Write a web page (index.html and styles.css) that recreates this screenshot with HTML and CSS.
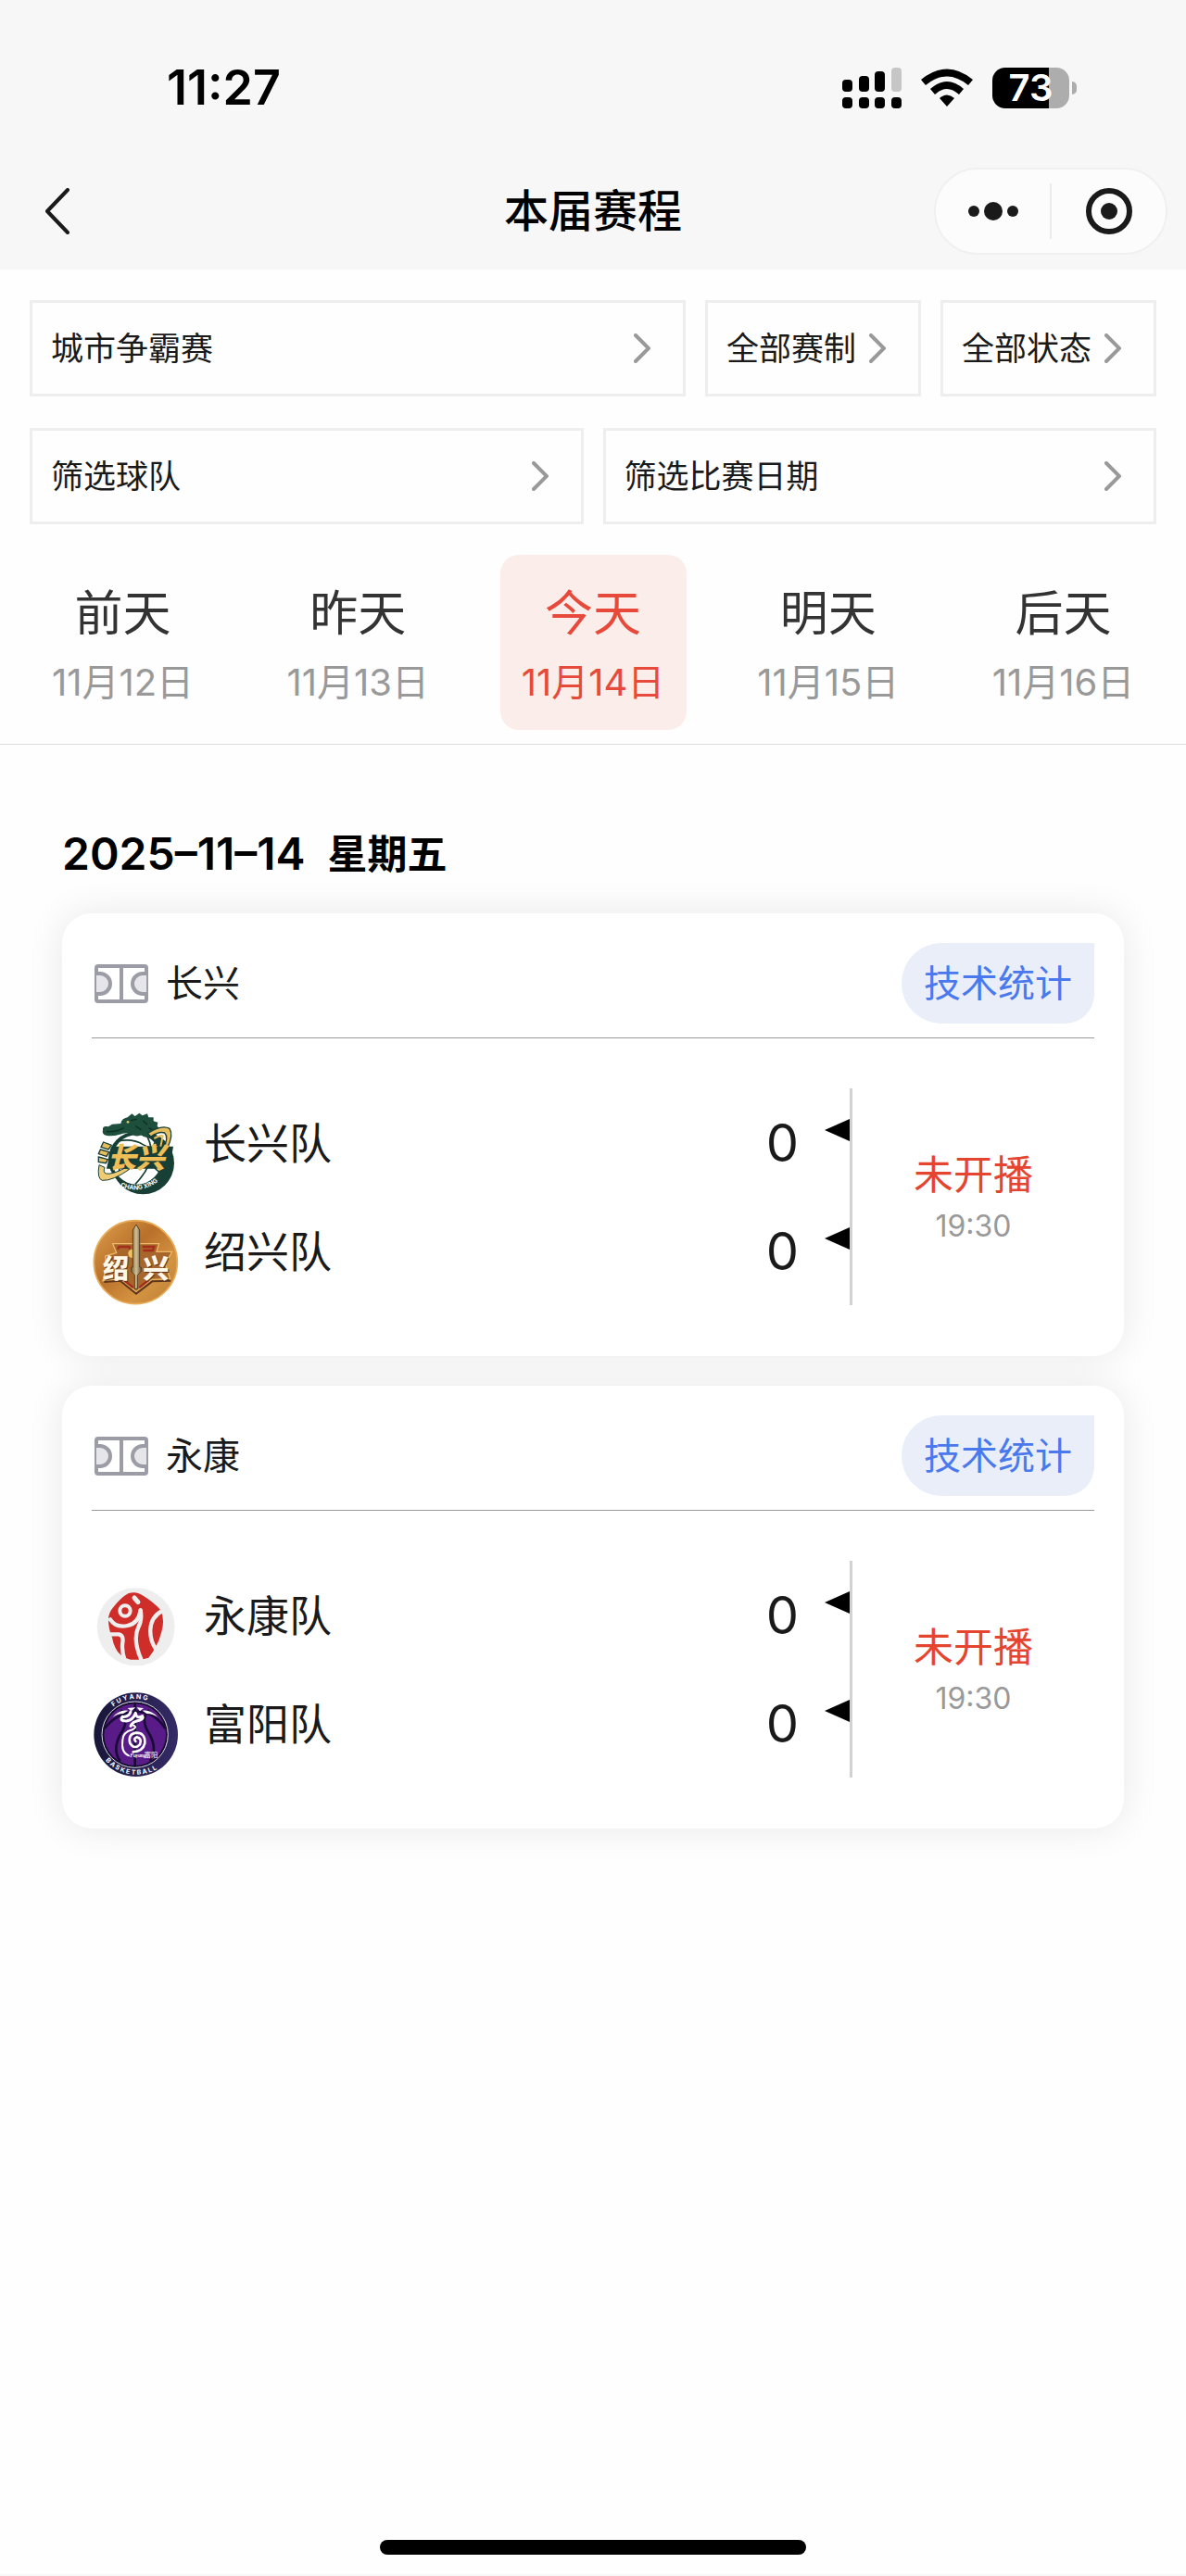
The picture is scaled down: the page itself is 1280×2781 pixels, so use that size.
FILE: index.html
```html
<!DOCTYPE html>
<html lang="zh-CN">
<head>
    <meta charset="UTF-8">
    <meta name="viewport" content="width=device-width, initial-scale=1.0">
    <title>本届赛程</title>
    <link rel="stylesheet" href="styles.css">
</head>
<body>
    <header class="header">
        <div class="status-bar">
            <span class="clock">11:27</span>
            <div class="status-icons">
                <svg class="signal" width="64" height="44" viewBox="0 0 64 44">
                    <rect x="0" y="13" width="11" height="13" rx="4"/>
                    <rect x="18" y="9" width="11" height="17" rx="4"/>
                    <rect x="35" y="4" width="11" height="22" rx="4"/>
                    <rect x="53" y="0" width="11" height="26" rx="4" fill="#c6c6c6"/>
                    <rect x="0" y="32" width="11" height="12" rx="4"/>
                    <rect x="18" y="32" width="11" height="12" rx="4"/>
                    <rect x="35" y="32" width="11" height="12" rx="4"/>
                    <rect x="53" y="32" width="11" height="12" rx="4"/>
                </svg>
                <svg class="wifi" width="56" height="44" viewBox="0 0 56 44">
                    <path d="M0 13Q28 -10 56 13L51 19Q28 0 5 19Z"/>
                    <path d="M10 23Q28 7 46 23L41 29Q28 17 15 29Z"/>
                    <path d="M20 33Q28 26 36 33L28 42Z"/>
                </svg>
                <div class="battery">
                    <span class="battery-level">73</span>
                    <span class="battery-cap"></span>
                </div>
            </div>
        </div>
        <nav class="nav">
            <button class="back" aria-label="返回">
                <svg width="28" height="50" viewBox="0 0 28 50"><path d="M25 2L3 25L25 48"/></svg>
            </button>
            <h1 class="title">本届赛程</h1>
            <div class="capsule">
                <button class="capsule-btn" aria-label="更多">
                    <svg width="56" height="20" viewBox="0 0 56 20">
                        <circle cx="7" cy="10" r="6"/>
                        <circle cx="28" cy="10" r="10"/>
                        <circle cx="49" cy="10" r="6"/>
                    </svg>
                </button>
                <button class="capsule-btn" aria-label="关闭">
                    <svg width="50" height="50" viewBox="0 0 50 50">
                        <circle cx="25" cy="25" r="22" fill="none" stroke="#1a1a1a" stroke-width="6"/>
                        <circle cx="25" cy="25" r="9"/>
                    </svg>
                </button>
            </div>
        </nav>
    </header>

    <main class="main">
        <section class="filters">
            <div class="filter-row">
                <button class="filter wide">城市争霸赛<svg class="arrow" viewBox="0 0 18 32"><path d="M2 2L16 16L2 30"/></svg></button>
                <button class="filter small">全部赛制<svg class="arrow" viewBox="0 0 18 32"><path d="M2 2L16 16L2 30"/></svg></button>
                <button class="filter small">全部状态<svg class="arrow" viewBox="0 0 18 32"><path d="M2 2L16 16L2 30"/></svg></button>
            </div>
            <div class="filter-row">
                <button class="filter wide">筛选球队<svg class="arrow" viewBox="0 0 18 32"><path d="M2 2L16 16L2 30"/></svg></button>
                <button class="filter wide">筛选比赛日期<svg class="arrow" viewBox="0 0 18 32"><path d="M2 2L16 16L2 30"/></svg></button>
            </div>
        </section>

        <section class="days">
            <button class="day"><span class="day-name">前天</span><span class="day-date">11月12日</span></button>
            <button class="day"><span class="day-name">昨天</span><span class="day-date">11月13日</span></button>
            <button class="day active"><span class="day-name">今天</span><span class="day-date">11月14日</span></button>
            <button class="day"><span class="day-name">明天</span><span class="day-date">11月15日</span></button>
            <button class="day"><span class="day-name">后天</span><span class="day-date">11月16日</span></button>
        </section>

        <section class="schedule">
            <h2 class="schedule-date"><span>2025–11–14</span><span class="weekday">星期五</span></h2>

            <article class="card">
                <div class="card-head">
                    <svg class="court" viewBox="0 0 58 42">
                        <rect x="2" y="2" width="54" height="38" rx="2"/>
                        <path d="M29 2V40"/>
                        <path class="area" d="M2 10H6A11 11 0 0 1 6 32H2M56 10H52A11 11 0 0 0 52 32H56"/>
                    </svg>
                    <span class="venue">长兴</span>
                    <a class="stats" href="#">技术统计</a>
                </div>
                <div class="match">
                    <div class="teams">
                        <div class="team">
                            <!-- 长兴 -->
                            <svg class="logo" viewBox="24 30 288 279">
                                <circle cx="190" cy="200" r="101" fill="#173f35"/>
                                <circle cx="168" cy="188" r="90" fill="#173f35"/>
                                <circle cx="170" cy="189" r="80" fill="#fff"/>
                                <path d="M105 130Q155 118 190 140T245 130M195 100Q250 180 165 268M105 155Q130 210 100 245M230 130Q195 200 245 230" fill="none" stroke="#173f35" stroke-width="5"/>
                                <path d="M60 92Q58 78 78 82L90 74L118 72Q120 56 140 52L154 40L164 48L178 38L188 46L204 40L208 52L224 52L224 64L238 68L236 80L246 90Q240 110 214 112Q196 122 184 108Q168 118 154 106Q136 98 112 108Q90 114 70 110Q56 106 60 92Z" fill="#1d4f3c"/>
                                <path d="M72 98Q104 100 128 86M150 62L170 58M190 62L204 76M166 80L184 92M208 86L224 94" fill="none" stroke="#0c3028" stroke-width="4"/>
                                <circle cx="141" cy="67" r="4" fill="#e3c66d"/>
                                <path d="M205 104Q250 74 276 88Q290 110 268 152L256 154Q274 116 260 102Q242 96 216 114Z" fill="#e8bd5d" stroke="#173f35" stroke-width="4"/>
                                <path d="M226 120Q248 108 254 112L246 152" fill="none" stroke="#e8bd5d" stroke-width="6"/>
                                <path d="M62 132L88 142L78 156L54 148ZM52 156L80 164L72 178L46 170ZM46 180L76 188L70 200L46 196Z" fill="#e8bd5d" stroke="#173f35" stroke-width="4"/>
                                <path d="M48 206Q40 250 58 256Q92 258 146 220L132 216Q90 238 70 234Q60 230 66 214Z" fill="#f1cb73" stroke="#173f35" stroke-width="3"/>
                                <path d="M88 146H288L276 218H72Z" fill="#173f35"/>
                                <text x="76" y="215" font-family="'Noto Sans CJK SC', sans-serif" font-weight="900" font-style="italic" font-size="92" fill="#efbe57">长兴</text>
                                <path id="cx-arc" d="M116 276Q196 308 260 240" fill="none"/>
                                <text font-family="Inter, sans-serif" font-weight="700" font-size="20" fill="#fff"><textPath href="#cx-arc">CHANG XING</textPath></text>
                            </svg>
                            <span class="team-name">长兴队</span>
                            <span class="score">0</span>
                            <span class="mark"></span>
                        </div>
                        <div class="team">
                            <!-- 绍兴 -->
                            <svg class="logo" viewBox="24 380 288 279">
                                <defs>
                                    <linearGradient id="bronze" x1="0" y1="0" x2="1" y2="1">
                                        <stop offset="0" stop-color="#dfa14f"/>
                                        <stop offset=".4" stop-color="#b9702a"/>
                                        <stop offset=".7" stop-color="#d49341"/>
                                        <stop offset="1" stop-color="#b87d35"/>
                                    </linearGradient>
                                    <linearGradient id="blade">
                                        <stop offset="0" stop-color="#715c3b"/>
                                        <stop offset=".5" stop-color="#d6c193"/>
                                        <stop offset="1" stop-color="#69563c"/>
                                    </linearGradient>
                                </defs>
                                <circle cx="166" cy="520" r="135" fill="url(#bronze)" stroke="#e8ac58" stroke-width="5"/>
                                <path d="M92 460H242L234 486H284L262 526L278 574L216 576L168 616L118 574L60 580L72 536L68 500L104 490Z" fill="#a9662a" stroke="#edb967" stroke-width="4"/>
                                <path d="M64 584L116 580L168 622L220 582L280 580" fill="none" stroke="#5e371c" stroke-width="6"/>
                                <path d="M108 478L112 470H146V478M188 470H226L222 482H190M128 578L158 602M178 602L208 578" fill="none" stroke="#a52d1d" stroke-width="7"/>
                                <circle cx="156" cy="492" r="14" fill="#ffdc72" opacity=".8"/>
                                <g font-family="'Noto Sans CJK SC', sans-serif" font-weight="900" font-size="84">
                                    <text x="63" y="575" fill="#62351c">绍</text>
                                    <text x="193" y="575" fill="#62351c">兴</text>
                                    <text x="60" y="571" fill="#fff7e8">绍</text>
                                    <text x="190" y="571" fill="#fff7e8">兴</text>
                                </g>
                                <path d="M168 398L179 416V536H184V550L172 562V606H163V562L152 550V536H157V416Z" fill="url(#blade)" stroke="#574128" stroke-width="3"/>
                            </svg>
                            <span class="team-name">绍兴队</span>
                            <span class="score">0</span>
                            <span class="mark"></span>
                        </div>
                    </div>
                    <div class="state">
                        <span class="state-text">未开播</span>
                        <span class="state-time">19:30</span>
                    </div>
                </div>
            </article>

            <article class="card">
                <div class="card-head">
                    <svg class="court" viewBox="0 0 58 42">
                        <rect x="2" y="2" width="54" height="38" rx="2"/>
                        <path d="M29 2V40"/>
                        <path class="area" d="M2 10H6A11 11 0 0 1 6 32H2M56 10H52A11 11 0 0 0 52 32H56"/>
                    </svg>
                    <span class="venue">永康</span>
                    <a class="stats" href="#">技术统计</a>
                </div>
                <div class="match">
                    <div class="teams">
                        <div class="team">
                            <!-- 永康 -->
                            <svg class="logo" viewBox="24 30 288 279">
                                <circle cx="167" cy="172" r="126" fill="#eee"/>
                                <path d="M78 148Q78 126 96 106Q120 76 142 64Q168 54 192 72Q226 94 246 116Q262 146 250 188Q240 232 208 272L184 278H150Q100 268 90 206Q78 180 78 148Z" fill="#cf2d29"/>
                                <circle cx="132" cy="120" r="17" fill="#cf2d29" stroke="#eee" stroke-width="12"/>
                                <g fill="none" stroke="#eee" stroke-width="13" stroke-linecap="round">
                                    <path d="M162 78L174 92" stroke-width="15"/>
                                    <path d="M84 148Q102 176 140 168Q176 160 182 118"/>
                                    <path d="M182 118Q188 150 174 176Q156 216 186 282"/>
                                    <path d="M252 120Q216 140 214 180Q212 216 232 244"/>
                                    <path d="M78 196H112Q128 200 124 222Q120 252 132 284"/>
                                </g>
                            </svg>
                            <span class="team-name">永康队</span>
                            <span class="score">0</span>
                            <span class="mark"></span>
                        </div>
                        <div class="team">
                            <!-- 富阳 -->
                            <svg class="logo" viewBox="24 380 288 279">
                                <defs>
                                    <linearGradient id="navy">
                                        <stop offset="0" stop-color="#171638"/>
                                        <stop offset="1" stop-color="#352b66"/>
                                    </linearGradient>
                                </defs>
                                <circle cx="167" cy="520" r="136" fill="url(#navy)"/>
                                <circle cx="164" cy="520" r="107" fill="#130d2b" stroke="#d9d5e6" stroke-width="3"/>
                                <circle cx="164" cy="520" r="100" fill="#581b87"/>
                                <path d="M164 420V620M66 500Q104 450 164 446T262 500M118 440Q150 470 116 520Q90 570 116 606M210 440Q178 470 212 520Q238 570 212 606" fill="none" stroke="#180b35" stroke-width="8"/>
                                <path d="M92 464Q112 438 142 442L126 452Q106 452 92 464ZM238 464Q216 438 188 442L202 452Q222 452 238 464ZM140 434L166 432L152 444ZM170 432L192 434L180 444Z" fill="#fff"/>
                                <path d="M150 446Q144 464 124 462Q112 476 136 476Q158 474 166 450Q168 470 188 460Q194 468 178 474Q156 478 150 492" fill="none" stroke="#fff" stroke-width="9" stroke-linecap="round" stroke-linejoin="round"/>
                                <path d="M152 488Q176 494 156 504Q124 512 124 538Q118 578 144 588" fill="none" stroke="#fff" stroke-width="6" stroke-linecap="round"/>
                                <path d="M166 542Q158 532 170 528Q188 532 180 552Q162 570 148 548Q140 518 168 514Q198 514 196 548Q190 574 158 576" fill="none" stroke="#fff" stroke-width="8" stroke-linecap="round"/>
                                <text x="148" y="594" font-family="'Liberation Serif', serif" font-style="italic" font-weight="700" font-size="16" fill="#fff">Fuyang</text>
                                <text x="194" y="594" font-family="'Noto Sans CJK SC', sans-serif" font-size="22" fill="#fff">富阳</text>
                                <path id="fy-top" d="M88 435A116 116 0 0 1 250 439" fill="none"/>
                                <path id="fy-bottom" d="M66 600A132 132 0 0 0 272 600" fill="none"/>
                                <g font-family="Inter, sans-serif" font-weight="700" font-size="21" fill="#fff">
                                    <text><textPath href="#fy-top" startOffset="8">F U Y A N G</textPath></text>
                                    <text><textPath href="#fy-bottom" startOffset="4">B A S K E T B A L L</textPath></text>
                                </g>
                            </svg>
                            <span class="team-name">富阳队</span>
                            <span class="score">0</span>
                            <span class="mark"></span>
                        </div>
                    </div>
                    <div class="state">
                        <span class="state-text">未开播</span>
                        <span class="state-time">19:30</span>
                    </div>
                </div>
            </article>
        </section>
    </main>

    <div class="home-bar"></div>
</body>
</html>
```
FILE: styles.css
```css
* {
    box-sizing: border-box;
}

body {
    margin: 0;
    min-height: 100vh;
    display: flex;
    flex-direction: column;
    background-color: #fefefe;
    color: #1a1a1a;
    font-family: Inter, "Noto Sans CJK SC", sans-serif;
    border-bottom: 2px solid #f7f7f7;
}

button {
    margin: 0;
    padding: 0;
    border: none;
    background: none;
    color: inherit;
    font-family: inherit;
    cursor: pointer;
}

svg {
    display: block;
    flex-shrink: 0;
}

/* header */
.header {
    background-color: #f7f7f7;
}

.status-bar {
    display: flex;
    justify-content: space-between;
    align-items: center;
    height: 164px;
    padding: 26px 118px 0 180px;
    color: #000;
}

.clock {
    font-size: 52px;
    font-weight: 600;
    line-height: 60px;
}

.status-icons {
    display: flex;
    align-items: center;
    gap: 21px;
}

.battery {
    display: flex;
    align-items: center;
    gap: 3px;
}

.battery-level {
    width: 83px;
    height: 44px;
    border-radius: 14px;
    background: linear-gradient(to right, #000 61px, #adadad 61px);
    color: #fff;
    font-size: 40px;
    font-weight: 600;
    line-height: 44px;
    text-align: center;
}

.battery-cap {
    width: 5px;
    height: 14px;
    border-radius: 0 5px 5px 0;
    background-color: #adadad;
}

.nav {
    display: grid;
    grid-template-columns: 1fr auto 1fr;
    align-items: center;
    height: 127px;
    padding: 0 20px 0 48px;
}

/* equal side columns, minus the different paddings */
.title {
    margin: 0 28px 0 0;
    color: #000;
    font-size: 48px;
    font-weight: 500;
    line-height: 64px;
}

.back {
    justify-self: start;
}

.back path {
    fill: none;
    stroke: #1a1a1a;
    stroke-width: 4;
    stroke-linecap: round;
    stroke-linejoin: round;
}

.capsule {
    justify-self: end;
    display: flex;
    align-items: center;
    width: 252px;
    height: 94px;
    border: 2px solid #f0f0f0;
    border-radius: 47px;
    background-color: #fcfcfc;
}

.capsule-btn {
    flex: 1;
    display: flex;
    justify-content: center;
    align-items: center;
    height: 60px;
    fill: #1a1a1a;
}

.capsule-btn + .capsule-btn {
    border-left: 2px solid #ebebeb;
}

/* filters */
.filters {
    display: flex;
    flex-direction: column;
    gap: 34px;
    padding: 33px 32px 0;
}

.filter-row {
    display: flex;
    gap: 21px;
}

.filter {
    display: flex;
    align-items: center;
    justify-content: space-between;
    height: 104px;
    padding: 0 35px 0 20px;
    border: 3px solid #eee;
    font-size: 35px;
    line-height: 48px;
    white-space: nowrap;
}

.filter.wide {
    flex: 1;
}

.filter.small {
    gap: 14px;
}

.arrow {
    width: 18px;
    height: 32px;
    fill: none;
    stroke: #999;
    stroke-width: 4;
    stroke-linecap: round;
}

/* day tabs */
.days {
    display: flex;
    justify-content: space-between;
    padding: 33px 32px 15px;
    border-bottom: 1px solid #ddd;
}

.day {
    display: flex;
    flex-direction: column;
    align-items: center;
    gap: 12px;
    width: 201px;
    padding: 30px 0 23px;
    border-radius: 20px;
}

.day.active {
    background-color: #fbeeea;
}

.day-name {
    color: #333;
    font-size: 52px;
    line-height: 68px;
}

.day-date {
    color: #999;
    font-size: 40px;
    line-height: 56px;
    white-space: nowrap;
}

.day.active .day-name,
.day.active .day-date {
    color: #e74a3b;
}

/* schedule */
.schedule {
    display: flex;
    flex-direction: column;
    gap: 32px;
    padding: 86px 67px 0;
}

.schedule-date {
    display: flex;
    gap: 24px;
    margin: 0;
    color: #000;
    font-size: 48px;
    font-weight: 600;
    line-height: 64px;
}

.weekday {
    font-size: 43px;
}

.card {
    padding: 32px 32px 55px;
    border-radius: 32px;
    background-color: #fff;
    box-shadow: 0 0 40px rgba(0, 0, 0, 0.09);
}

.card-head {
    display: flex;
    align-items: center;
    padding: 0 0 15px 3px;
    border-bottom: 1px solid #999;
}

.court {
    width: 58px;
    height: 42px;
    fill: none;
    stroke: #9c9ca6;
    stroke-width: 4;
}

.court .area {
    fill: #e6e6ea;
}

.venue {
    flex: 1;
    padding-left: 19px;
    font-size: 40px;
    line-height: 56px;
}

.stats {
    padding: 0 24px;
    border-radius: 44px 0 32px 44px;
    background-color: #e9eef9;
    color: #4a79ee;
    font-size: 40px;
    line-height: 87px;
    text-decoration: none;
}

.match {
    display: flex;
    padding-top: 54px;
}

.teams {
    flex: 1;
    border-right: 3px solid #d2d2d2;
}

.team {
    display: flex;
    align-items: center;
    height: 117px;
}

.logo {
    align-self: flex-end;
    width: 96px;
    height: 93px;
}

.team-name {
    flex: 1;
    padding-left: 25px;
    font-size: 46px;
    line-height: 64px;
}

.score {
    font-size: 56px;
    line-height: 68px;
}

.mark {
    margin: 0 0 28px 28px;
    border-top: 12px solid transparent;
    border-bottom: 12px solid transparent;
    border-right: 27px solid #000;
}

.state {
    display: flex;
    flex-direction: column;
    align-items: center;
    justify-content: center;
    gap: 4px;
    width: 261px;
}

.state-text {
    color: #e5452f;
    font-size: 43px;
    line-height: 60px;
}

.state-time {
    color: #999;
    font-size: 32px;
    line-height: 44px;
}

.home-bar {
    width: 36%;
    height: 16px;
    margin: auto auto 21px;
    border-radius: 8px;
    background-color: #000;
}
```
